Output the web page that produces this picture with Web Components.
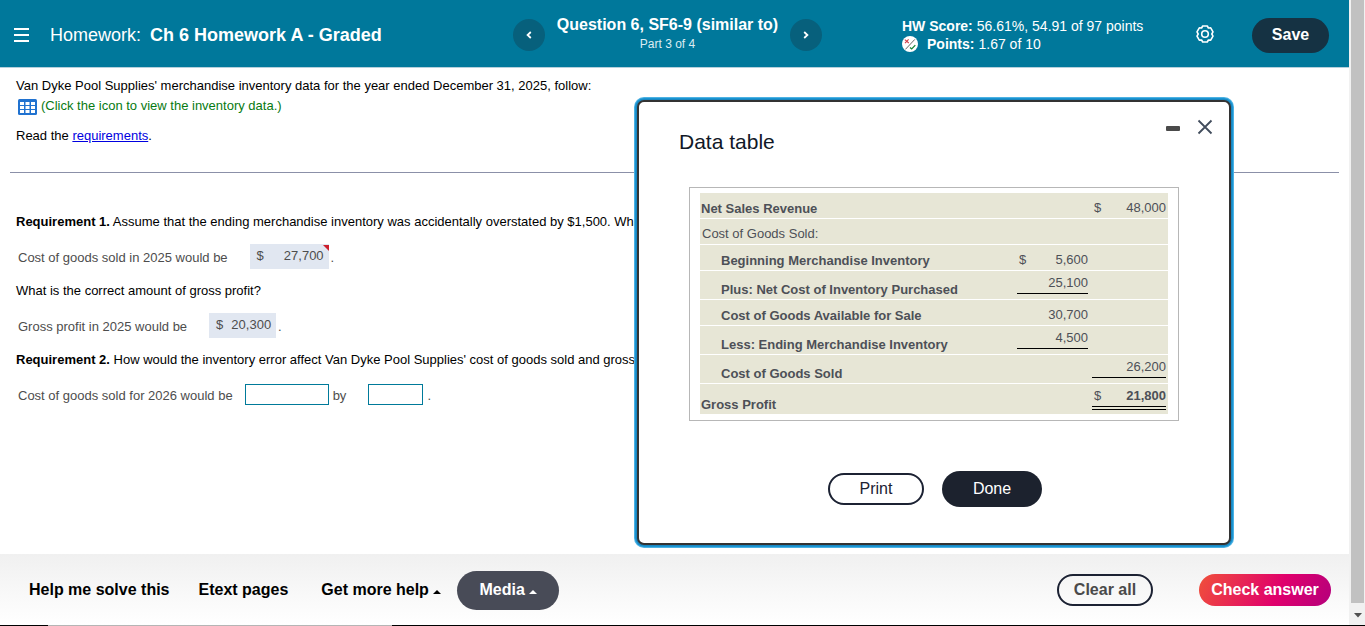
<!DOCTYPE html>
<html lang="en">
<head>
<meta charset="utf-8">
<title>Ch 6 Homework A - Graded</title>
<style>
    html, body {
        height: 100%;
        margin: 0;
    }
    body {
        font: 13px/16px "Liberation Sans", Arial, sans-serif;
        color: #000;
        background: #fff;
        overflow: hidden;
    }
</style>
</head>
<body>
<hw-app></hw-app>

<script>
(function() {
    "use strict";

    const ROWS = [
        { label: "Net Sales Revenue", second: { sign: "$", value: "48,000" } },
        { label: "Cost of Goods Sold:", plain: true },
        { label: "Beginning Merchandise Inventory", indent: true, first: { sign: "$", value: "5,600" } },
        { label: "Plus: Net Cost of Inventory Purchased", indent: true, first: { value: "25,100", line: "single" } },
        { label: "Cost of Goods Available for Sale", indent: true, first: { value: "30,700" } },
        { label: "Less: Ending Merchandise Inventory", indent: true, first: { value: "4,500", line: "single" } },
        { label: "Cost of Goods Sold", indent: true, second: { value: "26,200", line: "single" } },
        { label: "Gross Profit", second: { sign: "$", value: "21,800", line: "double" } }
    ];

    // every element of the page is a template cloned in an open shadow root
    function define(name, html, init) {
        const template = document.createElement("template");
        template.innerHTML = html;
        customElements.define(name, class extends HTMLElement {
            constructor() {
                super();
                this.attachShadow({ mode: "open" }).appendChild(template.content.cloneNode(true));
            }
            connectedCallback() {
                if (init) init(this, this.shadowRoot);
            }
        });
    }

    // kinds: save, outline, dark, media, check
    define("pill-button", `
        <style>
        :host { display: inline-flex; }
        button {
            box-sizing: border-box;
            min-width: 96px;
            height: 32px;
            padding: 0 12px;
            border: 0;
            border-radius: 20px;
            font: bold 16px/20px "Liberation Sans", Arial, sans-serif;
            color: #fff;
            background: #1c222e;
            white-space: nowrap;
            cursor: pointer;
        }
        :host([kind=save]) button { min-width: 77px; height: 35px; background: #153243; }
        :host([kind=outline]) button { border: 2px solid #1c2233; background: transparent; color: #4a4a4a; }
        :host([kind=dark]) button { min-width: 100px; height: 36px; }
        :host([kind=media]) button { min-width: 102px; height: 39px; background: #484b57; }
        :host([kind=check]) button {
            min-width: 132px;
            background: linear-gradient(115deg, #f0503a 0%, #e0006c 60%, #b4007c 100%);
        }
        :host([light]) button { font-weight: normal; }
        :host([light][kind=outline]) button { color: #1c2233; }
        </style>
        <button type="button"><slot></slot></button>
    `);

    define("caret-up", `
        <style>
        :host { display: inline-block; width: 8px; height: 5px; }
        svg { display: block; }
        </style>
        <svg width="8" height="4" viewBox="0 0 8 4"><path d="M0 4 4 0l4 4z" fill="currentColor"/></svg>
    `);

    define("hw-header", `
        <style>
        :host {
            display: flex;
            align-items: center;
            box-sizing: border-box;
            height: 68px;
            padding: 3px 20px 0 14px;
            border-bottom: 1px solid #b5d0dc;
            background: #00789b;
            color: #fff;
        }
        button {
            display: flex;
            align-items: center;
            justify-content: center;
            padding: 0;
            border: 0;
            background: none;
            color: #fff;
            cursor: pointer;
        }
        h1 {
            flex: 1;
            margin: 0 0 0 21px;
            font-size: 18px;
            line-height: 22px;
            font-weight: normal;
            white-space: nowrap;
        }
        h1 b { margin-left: 4px; }
        nav {
            display: flex;
            align-items: center;
            justify-content: space-between;
            width: 309px;
            margin-right: 80px;
        }
        nav button { width: 32px; height: 32px; border-radius: 50%; background: #07607c; }
        nav div { padding-bottom: 2px; text-align: center; white-space: nowrap; }
        h2 { margin: 0; font-size: 16px; line-height: 20px; }
        nav span { display: block; font-size: 12px; line-height: 18px; color: #dcecf2; }
        .score { width: 294px; font-size: 14px; line-height: 18px; white-space: nowrap; }
        .score div { display: flex; align-items: center; gap: 4px; }
        .score svg { margin-right: 5px; }
        .settings { margin-right: 38px; }
        </style>
        <button type="button" aria-label="Menu">
            <svg width="15" height="14" viewBox="0 0 15 14" fill="#fff"><path d="M0 0h15v2H0zM0 6h15v2H0zM0 12h15v2H0z"/></svg>
        </button>
        <h1>Homework: <b>Ch 6 Homework A - Graded</b></h1>
        <nav>
            <button type="button" aria-label="Previous question">
                <svg width="8" height="10" viewBox="0 0 8 10" fill="none" stroke="#fff" stroke-width="1.8"><path d="M5.8 2 2.6 5l3.2 3"/></svg>
            </button>
            <div>
                <h2>Question 6, SF6-9 (similar to)</h2>
                <span>Part 3 of 4</span>
            </div>
            <button type="button" aria-label="Next question">
                <svg width="8" height="10" viewBox="0 0 8 10" fill="none" stroke="#fff" stroke-width="1.8"><path d="M2.2 2 5.4 5 2.2 8"/></svg>
            </button>
        </nav>
        <div class="score">
            <div><b>HW Score:</b> <span>56.61%, 54.91 of 97 points</span></div>
            <div>
                <svg width="16" height="16" viewBox="0 0 16 16" fill="none">
                    <circle cx="8" cy="8" r="8" fill="#fff"/>
                    <path d="M3.4 13.4 12.8 3.4" stroke="#666" stroke-width="1"/>
                    <path d="m2.800 3.600 4 3.400M6.600 3.400 3 7.200" stroke="#d0404a" stroke-width="1.100"/>
                    <path d="m8 11.400 1.700 1.500 3.600-3.800" stroke="#168736" stroke-width="1.300"/>
                </svg>
                <b>Points:</b> <span>1.67 of 10</span>
            </div>
        </div>
        <button type="button" class="settings" aria-label="Settings">
            <svg width="18" height="20" viewBox="0 0 18 20" fill="none" stroke="#fff" stroke-width="1.600" stroke-linejoin="round">
                <path d="M6.700 1h4.600l1.100 2 2.300-.1 2.300 4-1.200 2.100 1.200 2.100-2.300 4-2.300-.1-1.100 2H6.700l-1.100-2-2.300.1-2.300-4L2.200 9 1 6.900l2.300-4 2.300.1z"/>
                <circle cx="9" cy="9" r="3.300"/>
            </svg>
        </button>
        <pill-button kind="save">Save</pill-button>
    `);

    define("answer-value", `
        <style>
        :host {
            position: relative;
            display: inline-flex;
            box-sizing: border-box;
            height: 25px;
            padding: 4px 5px 0 7px;
            background: #e1e7f1;
            color: #4d4d4d;
        }
        output { margin-left: 8px; }
        :host([wide]) output { margin-left: 20px; }
        i { display: none; }
        :host([wrong]) i {
            display: block;
            position: absolute;
            top: 1px;
            right: 0;
            border-top: 6px solid #cc1f2d;
            border-left: 6px solid transparent;
        }
        </style>
        <span>$</span><output><slot></slot></output><i></i>
    `);

    define("hw-question", `
        <style>
        :host {
            display: block;
            padding: 10px 10px 0;
            overflow: hidden;
            white-space: nowrap;
        }
        p { margin: 0; padding: 0 6px; }
        a { color: #0000e0; }
        .view { display: flex; align-items: center; margin: 4px 0 13px; padding: 0 8px; color: #077a12; }
        .view button {
            display: flex;
            gap: 4px;
            padding: 0;
            border: 0;
            background: none;
            font: inherit;
            color: inherit;
            cursor: pointer;
        }
        .view svg { margin-top: 1px; }
        hr { margin: 28px 0 41px; border: 0; border-top: 1px solid #8b90a8; }
        .answer {
            display: flex;
            align-items: center;
            height: 25px;
            margin: 14px 0;
            padding: 0 8px;
            color: #4d4d4d;
        }
        .answer answer-value { margin: 0 2px 0 22px; }
        .answer span, .answer label { padding-top: 3px; }
        input {
            box-sizing: border-box;
            width: 84px;
            height: 21px;
            margin: 0 4px 0 12px;
            padding: 0 4px;
            border: 1px solid #007a9a;
            background: #fff;
            font: inherit;
        }
        .short { width: 55px; margin-left: 22px; }
        </style>
        <p>Van Dyke Pool Supplies' merchandise inventory data for the year ended December 31, 2025, follow:</p>
        <div class="view">
            <button type="button">
                <svg width="19" height="16" viewBox="0 0 19 16">
                    <rect width="19" height="16" rx="1.500" fill="#2072d0"/>
                    <path d="M2 3h4v3H2zM7.500 3h4v3h-4zM13 3h4v3h-4zM2 7h4v3H2zM7.500 7h4v3h-4zM13 7h4v3h-4zM2 11h4v3H2zM7.500 11h4v3h-4zM13 11h4v3h-4z" fill="#fff"/>
                </svg>
                (Click the icon to view the inventory data.)
            </button>
        </div>
        <p>Read the <a href="#requirements">requirements</a>.</p>
        <hr>
        <p><b>Requirement 1.</b> Assume that the ending merchandise inventory was accidentally overstated by $1,500. What</p>
        <div class="answer">
            <span>Cost of goods sold in 2025 would be</span>
            <answer-value wide wrong>27,700</answer-value>
            <span>.</span>
        </div>
        <p>What is the correct amount of gross profit?</p>
        <div class="answer">
            <span>Gross profit in 2025 would be</span>
            <answer-value>20,300</answer-value>
            <span>.</span>
        </div>
        <p><b>Requirement 2.</b> How would the inventory error affect Van Dyke Pool Supplies' cost of goods sold and gross profit</p>
        <div class="answer">
            <label for="direction">Cost of goods sold for 2026 would be</label>
            <input id="direction" type="text">
            <label for="amount">by</label>
            <input id="amount" class="short" type="text">
            <span>.</span>
        </div>
    `);

    define("income-table", `
        <style>
        :host { display: block; padding: 4px 10px 5px; border: 1px solid #b7b7b7; }
        table { width: 100%; border-collapse: separate; border-spacing: 0 1px; color: #4d5057; }
        tr { background: #e7e6d6; }
        th, td { height: 25px; padding: 0; vertical-align: bottom; box-sizing: border-box; }
        th { padding: 0 0 1px 1px; text-align: left; }
        .plain th { padding: 0 0 2px 2px; font-weight: normal; }
        .indent th { padding-left: 21px; }
        .single td { height: 28px; }
        .double td { height: 30px; }
        td { width: 75px; }
        td + td { width: 76px; padding-right: 2px; }
        td div {
            display: flex;
            justify-content: flex-end;
            margin: 0 0 2px 0;
            padding: 0 0 0 2px;
        }
        td:nth-child(2) div { margin-right: 4px; }
        td div span:first-child:not(:last-child) { margin-right: auto; }
        td .single { margin-bottom: 5px; padding-bottom: 2px; border-bottom: 1px solid #000; }
        td .double { margin-bottom: 4px; padding-bottom: 2px; border-bottom: 4px double #000; }
        .double span:last-child { font-weight: bold; }
        </style>
        <table><tbody></tbody></table>
    `, (host, root) => {
        const cell = (amount) => {
            if (!amount) return `<td></td>`;
            const sign = amount.sign ? `<span>${amount.sign}</span>` : "";
            return `<td><div class="${amount.line || ""}">${sign}<span>${amount.value}</span></div></td>`;
        };
        root.querySelector("tbody").innerHTML = ROWS.map((row) => {
            const line = (row.first || row.second || {}).line || "";
            const names = [row.indent ? "indent" : "", row.plain ? "plain" : "", line].join(" ");
            return `<tr class="${names}"><th scope="row">${row.label}</th>${cell(row.first)}${cell(row.second)}</tr>`;
        }).join("");
    });

    define("data-dialog", `
        <style>
        :host {
            display: block;
            box-sizing: border-box;
            padding: 16px 50px 36px;
            border: 2px solid #333;
            border-radius: 7px;
            box-shadow: 0 0 0 1px #1a86c0, 0 0 0 2px #1b95d3, 0 0 0 3px #4db1e2;
            background: #fff;
        }
        header { display: flex; justify-content: flex-end; gap: 16px; margin-right: -34px; }
        header button { display: flex; padding: 0; border: 0; background: none; cursor: pointer; }
        h3 {
            margin: -6px -10px 33px;
            font-size: 21px;
            line-height: 24px;
            font-weight: normal;
            color: #111827;
        }
        footer { display: flex; align-items: center; justify-content: center; gap: 18px; margin: 50px 0 0 2px; }
        </style>
        <header>
            <button type="button" aria-label="Minimize">
                <svg width="16" height="18" viewBox="0 0 16 18"><rect x="1" y="8" width="14" height="5" rx="1" fill="#4a4a4a"/></svg>
            </button>
            <button type="button" aria-label="Close">
                <svg width="16" height="18" viewBox="0 0 16 18" stroke="#414c5c" stroke-width="1.800"><path d="m1.500 2.500 13 13m0-13-13 13"/></svg>
            </button>
        </header>
        <h3><slot name="title"></slot></h3>
        <slot></slot>
        <footer>
            <pill-button kind="outline" light>Print</pill-button>
            <pill-button kind="dark" light>Done</pill-button>
        </footer>
    `, (host) => {
        host.setAttribute("role", "dialog");
    });

    define("hw-footer", `
        <style>
        :host {
            display: flex;
            align-items: center;
            box-sizing: border-box;
            height: 71px;
            padding: 1px 18px 0 29px;
            background: linear-gradient(#f0f0f0, #fff);
        }
        a { font: bold 16px/20px "Liberation Sans", Arial, sans-serif; color: #000; text-decoration: none; white-space: nowrap; }
        .etext { margin: 0 33px 0 29px; }
        .media { margin-left: 16px; }
        .clear { margin: 0 46px 0 auto; }
        </style>
        <a href="#help">Help me solve this</a>
        <a class="etext" href="#etext">Etext pages</a>
        <a href="#more">Get more help <caret-up></caret-up></a>
        <pill-button class="media" kind="media">Media <caret-up></caret-up></pill-button>
        <pill-button class="clear" kind="outline">Clear all</pill-button>
        <pill-button kind="check">Check answer</pill-button>
    `);

    define("scroll-track", `
        <style>
        :host { display: flex; flex-direction: column; padding: 0 1px 0 2px; background: #f1f1f1; }
        .thumb { flex: 1; background: #c1c1c1; }
        .arrow { display: flex; align-items: center; justify-content: center; height: 22px; padding-top: 3px; box-sizing: border-box; }
        </style>
        <div class="thumb"></div>
        <div class="arrow"><svg width="8" height="5" viewBox="0 0 8 5"><path d="M0 0h8L4 4.500z" fill="#505050"/></svg></div>
    `);

    define("hw-app", `
        <style>
        :host { display: flex; flex-direction: column; height: 100vh; }
        .window { display: flex; flex: 1; min-height: 0; }
        .page { position: relative; display: flex; flex: 1; flex-direction: column; min-width: 0; }
        scroll-track { width: 13px; }
        hw-question { flex: 1; }
        data-dialog { position: absolute; top: 100px; right: 118px; width: 594px; }
        .edge { height: 1px; background: linear-gradient(90deg, #000 48px, #b5b5b5 48px 392px, #000 392px); }
        </style>
        <div class="window">
            <div class="page">
                <hw-header></hw-header>
                <hw-question></hw-question>
                <hw-footer></hw-footer>
                <data-dialog>
                    <span slot="title">Data table</span>
                    <income-table></income-table>
                </data-dialog>
            </div>
            <scroll-track></scroll-track>
        </div>
        <div class="edge"></div>
    `);
}) ();
</script>
</body>
</html>
